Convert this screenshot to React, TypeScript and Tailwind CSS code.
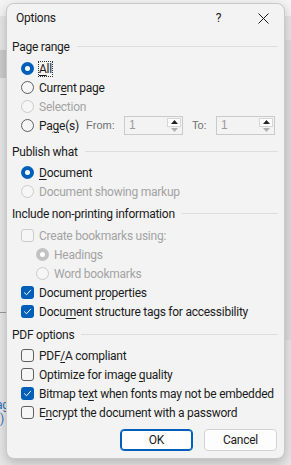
import type { ReactNode } from "react"
import clsx from "clsx"

const Heading = ({ children, className }: { children: ReactNode; className?: string }) => (
  <div className={clsx("flex items-center h-[19px] gap-[7px]", className)}>
    <span className="text-[#1b1b1b] whitespace-nowrap">{children}</span>
    <div className="flex-1 h-px bg-[#dddddd]"></div>
  </div>
)

const Radio = ({
  checked,
  disabled,
  children,
}: {
  checked?: boolean
  disabled?: boolean
  children: ReactNode
}) => (
  <div className="flex items-center h-[19px] gap-[5px]">
    <span
      className={clsx(
        "w-[13px] h-[13px] rounded-full flex items-center justify-center shrink-0",
        checked && !disabled && "bg-[#005fb8]",
        checked && disabled && "bg-[#c2c2c2]",
        !checked && !disabled && "border border-[#5f5f5f] bg-[#f6f6f6]",
        !checked && disabled && "border border-[#cbcbcb] bg-[#f6f6f6]"
      )}
    >
      {checked && <span className="w-[5px] h-[5px] rounded-full bg-white"></span>}
    </span>
    <span className={clsx("whitespace-nowrap", disabled ? "text-[#a3a3a3]" : "text-[#1b1b1b]")}>{children}</span>
  </div>
)

const Check = ({
  checked,
  disabled,
  children,
}: {
  checked?: boolean
  disabled?: boolean
  children: ReactNode
}) => (
  <div className="flex items-center h-[19px] gap-[5px]">
    <span
      className={clsx(
        "w-[13px] h-[13px] rounded-[3px] flex items-center justify-center shrink-0",
        checked && "bg-[#005fb8]",
        !checked && !disabled && "border border-[#5f5f5f] bg-[#f6f6f6]",
        !checked && disabled && "border border-[#cbcbcb] bg-[#f6f6f6]"
      )}
    >
      {checked && (
        <svg width="9" height="9" viewBox="0 0 9 9" fill="none">
          <path d="M1.5 4.8 L3.6 6.8 L7.6 2.2" stroke="white" strokeWidth="1" strokeLinecap="round" strokeLinejoin="round" />
        </svg>
      )}
    </span>
    <span className={clsx("whitespace-nowrap", disabled ? "text-[#a3a3a3]" : "text-[#1b1b1b]")}>{children}</span>
  </div>
)

const U = ({ children }: { children: ReactNode }) => (
  <span className="underline underline-offset-2 decoration-1">{children}</span>
)

const SpinBox = () => (
  <div className="w-[59px] h-[19px] border border-[#cacaca] bg-[#f3f3f3] flex items-stretch">
    <span className="flex-1 pl-[4px] text-[#9a9a9a] text-[12px] leading-[17px] font-['Liberation_Sans',sans-serif]">1</span>
    <div className="w-[14px] flex flex-col my-[1px] mr-[1px]">
      <div className="flex-1 bg-white border border-[#d6d6d6] flex items-center justify-center">
        <svg width="7" height="4" viewBox="0 0 7 4">
          <path d="M0 4 L3.5 0 L7 4 Z" fill="#222" />
        </svg>
      </div>
      <div className="flex-1 flex items-center justify-center">
        <svg width="7" height="4" viewBox="0 0 7 4">
          <path d="M0 0 L3.5 4 L7 0 Z" fill="#b0b0b0" />
        </svg>
      </div>
    </div>
  </div>
)

export default function App() {
  return (
    <div className="relative w-[291px] h-[465px] overflow-hidden bg-[#e7e7e7] font-['Segoe_UI','Roboto',sans-serif] text-[12px] tracking-[-0.25px]">
      {/* app behind the dialog */}
      <div className="absolute left-0 top-0 w-full h-[16px] bg-[#f4f4f4]"></div>
      <div className="absolute left-0 top-[50px] w-[8px] h-[28px] bg-[#cdcdcd]"></div>
      <div className="absolute right-0 top-[40px] w-[8px] h-[300px] bg-[#dedede]"></div>
      <div className="absolute left-0 top-[312px] w-[8px] h-px bg-[#9a9a9a]"></div>
      <div className="absolute left-[-4px] top-[398px] text-[#2f6fb8] leading-[14px]">
        ag
        <br />
        ))
      </div>

      {/* dialog */}
      <div className="absolute left-[6px] top-[3px] w-[279px] h-[456px] rounded-[8px] bg-[#f3f3f3] border border-[#c9c9c9] shadow-[0_4px_12px_rgba(0,0,0,0.22)] flex flex-col">
        <div className="flex items-center h-[28px] pl-[9px]">
          <span className="text-[#1b1b1b]">Options</span>
          <span className="ml-auto w-[45px] text-center text-[#1b1b1b]">?</span>
          <span className="w-[45px] mr-[-2px] flex justify-center">
            <svg width="11" height="11" viewBox="0 0 11 11">
              <path d="M0.5 0.5 L10.5 10.5 M10.5 0.5 L0.5 10.5" stroke="#1b1b1b" strokeWidth="1" />
            </svg>
          </span>
        </div>

        <div className="flex flex-col pl-[5px] pr-[6px] mt-[5px]">
          <Heading>Page range</Heading>
          <div className="flex flex-col pl-[9px] mt-[3px]">
            <Radio checked>
              <span className="outline outline-1 outline-dotted outline-[#333] outline-offset-0">
                <U>A</U>ll
              </span>
            </Radio>
            <Radio>
              Curr<U>e</U>nt page
            </Radio>
            <Radio disabled>Selection</Radio>
            <div className="flex items-center h-[19px]">
              <div className="w-[65px] shrink-0">
                <Radio>
                  Pa<U>g</U>e(s)
                </Radio>
              </div>
              <span className="w-[38px] text-[#707070] text-[11px] tracking-normal font-['Liberation_Sans',sans-serif]">From:</span>
              <SpinBox />
              <span className="ml-[9px] w-[24px] text-[#707070] text-[11px] tracking-normal font-['Liberation_Sans',sans-serif]">To:</span>
              <SpinBox />
            </div>
          </div>

          <Heading className="mt-[7px]">Publish what</Heading>
          <div className="flex flex-col pl-[9px] mt-[2px]">
            <Radio checked>
              <U>D</U>ocument
            </Radio>
            <Radio disabled>Document showing markup</Radio>
          </div>

          <Heading className="mt-[3px]">Include non-printing information</Heading>
          <div className="flex flex-col pl-[9px] mt-[3px]">
            <Check disabled>Create bookmarks using:</Check>
            <div className="pl-[15px] flex flex-col">
              <Radio checked disabled>
                Headings
              </Radio>
              <Radio disabled>Word bookmarks</Radio>
            </div>
            <Check checked>
              Document p<U>r</U>operties
            </Check>
            <Check checked>
              Docu<U>m</U>ent structure tags for accessibility
            </Check>
          </div>

          <Heading className="mt-[4px]">PDF options</Heading>
          <div className="flex flex-col pl-[9px] mt-[2px]">
            <Check>
              PDF<U>/</U>A compliant
            </Check>
            <Check>
              Optimize for image <U>q</U>uality
            </Check>
            <Check checked>
              Bitmap te<U>x</U>t when fonts may not be embedded
            </Check>
            <Check>
              E<U>n</U>crypt the document with a password
            </Check>
          </div>
        </div>

        <div className="flex justify-end gap-[11px] pr-[7px] mt-[7px]">
          <button className="w-[73px] h-[22px] rounded-[4px] bg-white border border-[#005fb8] text-[#1b1b1b] shadow-[inset_0_0_0_1px_#005fb8]">
            OK
          </button>
          <button className="w-[73px] h-[22px] rounded-[4px] bg-[#fdfdfd] border border-[#d3d3d3] text-[#1b1b1b]">
            Cancel
          </button>
        </div>
      </div>
    </div>
  )
}
